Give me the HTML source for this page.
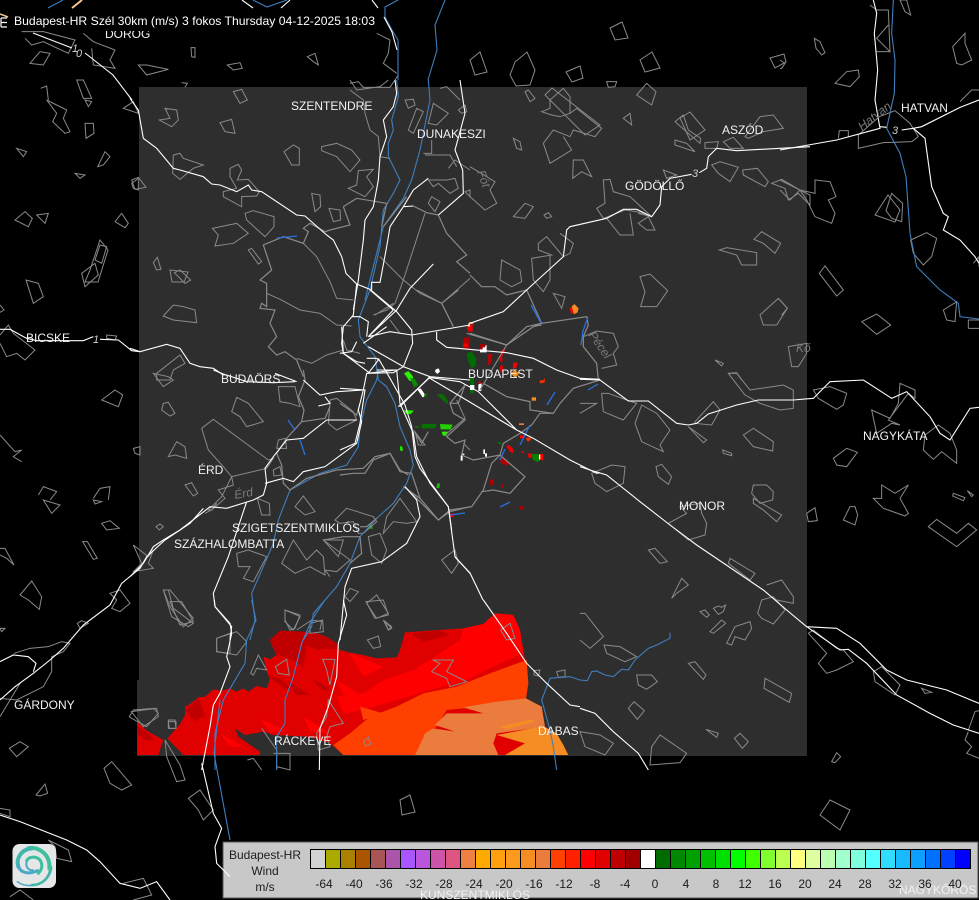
<!DOCTYPE html>
<html lang="hu"><head><meta charset="utf-8"><title>Budapest-HR Wind</title>
<style>
html,body{margin:0;padding:0;background:#000;width:979px;height:900px;overflow:hidden}
svg{display:block;position:absolute;left:0;top:0}
path{vector-effect:non-scaling-stroke;fill:none;stroke-linejoin:miter}
.o path,path.o{stroke:#8a8a8a;stroke-width:1}
.r path,path.r{stroke:#fff;stroke-width:1.1}
.b path,path.b{stroke:#3f7fbf;stroke-width:1.1}
.g path,path.g{stroke:#8a8a8a;stroke-width:1.2}
.f path{stroke:none}
text{font-family:"Liberation Sans",sans-serif}
.l text{fill:#f2f2f2;font-size:12px}
.n text{fill:#cfcfcf;font-size:11px;font-style:italic}
.i text{fill:#7a7a7a;font-size:12px;font-style:italic}
.t text{fill:#1c1c1c;font-size:12px;text-anchor:middle}
</style></head><body>
<svg width="979" height="900" viewBox="0 0 979 900" xmlns="http://www.w3.org/2000/svg">
<rect width="979" height="900" fill="#000"/>
<rect x="139" y="87" width="668" height="669" fill="#2e2e2e"/>
<rect x="137" y="680" width="2" height="76" fill="#2e2e2e"/>

<!-- wide radar field -->
<g class="f" transform="translate(130,600) scale(.33333)">
<path style="fill:#e00000" d="M22 365 50 392 100 420 85 465 22 465z"/>
<path style="fill:#c00000" d="M22 378 80 420 50 422 22 402z"/>
<path style="fill:#e00000" d="M112 415 130 395 150 372 165 345 165 320 180 312 205 292 225 290 250 268 275 272 300 265 320 275 340 265 355 275 380 258 410 265 420 238 410 215 400 170 420 178 440 165 425 135 420 120 450 92 480 98 520 95 560 100 590 110 620 130 630 150 660 158 700 165 740 175 800 172 810 150 825 97 900 92 1000 85 1060 72 1095 40 1150 45 1170 90 1185 180 1195 250 1188 295 1235 320 1245 380 1280 400 1300 435 1315 465 640 465 600 430 540 410 430 405 400 395 345 405 315 385 325 410 390 455 390 465 160 465z"/>
<path style="fill:#c00000" d="M420 120 450 92 520 95 590 110 620 130 630 150 590 145 560 150 530 135 520 200 480 175 440 165 425 135zM410 225 450 235 490 270 460 262zM545 235 590 260 600 275 570 265zM165 330 205 295 225 345 195 365zM470 240 540 285 500 285zM840 100 930 92 960 105 880 125z"/>
<path style="fill:#ff0000" d="M1000 85 1060 72 1095 40 1150 45 1170 90 1180 160 1100 195 1010 240 900 270 800 300 700 330 640 340 620 290 700 280 760 240 850 210 930 160 990 120zM390 355 470 395 420 395zM270 400 340 440 300 440zM660 160 760 200 700 230zM620 240 700 290 640 285zM520 350 600 400 540 395z"/>
<path style="fill:#ff4000" d="M1190 180 1195 250 1188 295 1100 305 1050 320 950 330 920 380 880 410 855 465 640 465 610 435 660 400 720 350 800 320 880 280 980 260 1080 220zM690 320 760 340 700 360zM900 310 1000 300 950 320z"/>
<path style="fill:#ea7d3e" d="M855 465 885 400 910 385 975 395 915 375 950 340 1060 340 1000 322 1100 305 1188 295 1235 320 1245 380 1100 400 1090 430 1105 465z"/>
<path style="fill:#f58c24" d="M1100 405 1170 392 1240 378 1280 400 1300 435 1315 465 1125 465 1185 430z"/>
<path style="fill:#f58c24" d="M1110 380 1205 358 1215 365 1130 388z"/>
</g>

<!-- legend background -->
<rect x="223" y="842" width="755" height="56" fill="#c8c8c8" stroke="#555" stroke-width="1"/>

<!-- small echoes -->
<g class="f" transform="translate(340,290) scale(.33333)">
<path style="fill:#f00" d="M688 55 700 50 705 72 694 70z"/><path style="fill:#f58c24" d="M695 50 703 42 716 55 712 68 702 72z"/>
<path style="fill:#ea7d3e" d="M387 96h13v6h-13z"/><path style="fill:#e00" d="M380 112 385 103 398 103 398 125 385 125z"/><path style="fill:#fff" d="M385 100h4v10h-4z"/>
<path style="fill:#b00000" d="M372 142 388 142 388 178 368 178z"/><path style="fill:#f00" d="M370 160h12v10h-12z"/>
<path style="fill:#fff" d="M420 175 430 168 440 165 440 187 420 187z"/><path style="fill:#a00000" d="M420 162 438 162 435 172 428 172 428 178 420 178z"/>
<path style="fill:#006c00" d="M380 190 395 185 408 205 408 228 395 235 385 215z"/>
<path style="fill:#c00000" d="M445 192 457 192 455 210 450 225 444 225z"/>
<path style="fill:#d00000" d="M483 180 497 178 487 200 488 215 478 215zM480 226 490 226 488 245 478 245z"/>
<path style="fill:#f00" d="M520 218 533 218 528 235 518 235z"/>
<path style="fill:#f58c24" d="M512 250 524 240 538 250 526 264z"/>
<path style="fill:#f33000" d="M598 272 610 270 615 264 614 278 600 280z"/>
<path style="fill:#f59020" d="M575 322h13v10h-13z"/>
<path style="fill:#2bf000" d="M192 250 205 243 218 258 222 275 208 272z"/><path style="fill:#0a8a00" d="M210 262 225 268 235 285 222 292z"/>
<path style="fill:#006c00" d="M390 262h12v48h-12z"/><path style="fill:#fff" d="M390 285h13v15h-13z"/>
<path style="fill:#fff" d="M415 283 425 280 424 303 415 303z"/><path style="fill:#d00000" d="M415 275h8v6h-8z"/>
<path style="fill:#fff" d="M287 238 296 235 300 245 292 252 285 245z"/>
<path style="fill:#fff" d="M232 298 242 295 258 318 248 322z"/><path style="fill:#0a7000" d="M254 310 262 312 258 322 252 320z"/>
<path style="fill:#0a6c00" d="M290 313 310 312 325 335 322 342 308 330 298 322z"/>
<path style="fill:#28f000" d="M192 360 222 362 212 372 198 372z"/>
<path style="fill:#0a7000" d="M245 402 290 402 285 415 245 415zM225 408h13v5h-13z"/><path style="fill:#22d000" d="M300 402 338 404 332 418 302 418z"/><path style="fill:#2bf000" d="M305 425 325 425 318 438 308 436z"/>
<path style="fill:#20e000" d="M180 468 187 470 189 483 180 482z"/>
<path style="fill:#18c000" d="M292 580 300 580 298 594 289 594z"/>
<path style="fill:#fff" d="M430 478h5v12h6v10h-6v-8h-5zM362 498 368 490 375 492 368 496 368 512 362 512z"/>
<path style="fill:#e00" d="M498 468 508 465 520 478 520 490 510 485z"/><path style="fill:#b00000" d="M478 506 490 503 510 518 505 526 484 522z"/>
<path style="fill:#0a7000" d="M472 456 480 455 486 465 476 462z"/>
<path style="fill:#f00" d="M540 436h10v9h-10z"/><path style="fill:#f33000" d="M558 443h14v6l-6 6-6-4z"/><path style="fill:#ea7d3e" d="M537 400h15v5h-15z"/><path style="fill:#f00" d="M545 484h7v5h-7z"/>
<path style="fill:#f00" d="M565 490h10v13h-10z"/><path style="fill:#f00" d="M600 492h10v18h-10z"/><path style="fill:#0a8000" d="M575 492 600 492 600 512 590 516 578 508z"/><path style="fill:#fff" d="M597 494h4v14h-4z"/>
<path style="fill:#b00000" d="M450 568h10v17h-10zM483 582h7v10h-7zM540 648h10v10h-10z"/><path style="fill:#d00000" d="M330 670h12v12h-12z"/>
<path style="fill:#18c000" d="M85 703 95 700 98 716 88 716z"/>
</g>

<!-- thin outlines -->
<g class="o" transform="translate(130,80) scale(.33333)">
<path d="M310 35 335 28 352 60 330 70zM105 85 140 90 145 120 125 140 88 120 120 115zM270 128 305 118 315 160 285 155zM5 300 25 292 48 322 15 328zM130 225 150 220 160 235 220 255 190 265 150 298 128 280zM300 265 325 253 335 270 322 300 355 298 388 335 380 348 335 350 335 380 280 350 280 335 320 325 300 290zM462 215 490 195 508 205 508 255 485 255zM575 200 620 190 665 210 690 240 660 275 620 230 575 212zM685 272 730 268 710 290 730 320 705 350 655 325 680 315zM545 340 570 345 572 380 555 395zM597 385 630 390 632 420 610 425zM345 400 370 392 432 410 432 440 405 470 350 420zM247 445 320 430 355 460 310 490 255 498 265 465zM355 510 365 505 395 545 385 552zM70 548 82 532 93 568 80 570zM133 578 150 570 182 600 165 610zM100 708 130 675 160 680 195 690 200 728 130 720zM80 880 150 825 165 850 130 870 120 900 80 900z"/>
<path d="M660 0 680 30 750 20 775 0M660 30 700 60 705 100 720 150 745 170 750 230 780 235M825 60 850 58 855 75 835 85zM835 150 860 85 880 95 850 160zM930 25 950 20 990 60M895 130 910 70 955 100 920 135zM905 180 905 220 880 220M885 225 960 225 980 260M955 265 975 240 1020 270M895 300 950 300 975 295 985 325 960 340 925 310 910 320zM895 370 905 350 930 365 915 395zM985 90 1005 75 1010 95 995 100zM1005 335 1020 330 1020 350z"/>
<path d="M520 490 560 530 600 605 620 655 670 660M410 640 450 658 510 690 570 700 620 735 665 738M640 810 590 825 545 850 500 835M750 530 820 600 795 670 770 690 730 705M820 600 870 640 935 670 1020 595M935 670 970 740M885 400 820 600M640 780 650 810 690 820M780 720 810 760M735 705 790 670"/>
</g>
<g class="o" transform="translate(470,80) scale(.33333)">
<path d="M165 35 175 30 195 55 180 65zM240 60 280 25 300 50 300 100 270 110 245 105 215 95 240 85zM300 100 320 85 395 145 375 170 310 150 300 170 250 150 220 190 240 250 305 210 280 170M460 115 480 100 485 135zM500 45 530 10 558 35 545 75zM410 5 440 5 435 20 415 22zM615 125 640 105 655 150 692 175 690 190 655 160zM615 180 650 190 675 215 615 195zM705 188 745 185 740 205 705 205zM760 185 790 172 820 205 780 205zM825 170 870 110 910 105 940 145 880 155 835 175zM725 255 750 245 805 262 780 305 745 280zM818 270 862 265 895 305 885 320 820 285zM905 310 935 298 990 330 1020 345 1020 375 985 340 955 360 945 325zM852 478 875 455 932 490 915 520 880 490zM748 510 770 503 860 518 860 555 815 555 800 525zM510 590 540 582 593 632 560 680 512 680 525 635zM870 705 925 655 952 685 920 735 880 735zM955 800 1010 790 1010 820 985 860 965 860zM735 840 760 850 755 858zM775 880 800 878 815 900M400 300 420 298 430 335 480 350 545 410 500 395 465 390 400 415 380 385 405 370zM410 415 450 465 490 465 480 400M505 430 535 410 555 450 530 450zM580 270 620 285 590 295zM310 240 340 240 365 290 335 275 308 295zM130 410 165 370 190 380 165 415zM222 405 235 398 245 410 230 415zM270 460 310 490 300 520 280 530 230 470 205 490 205 510 245 525 185 535 190 600 220 635 240 600 240 525M95 540 150 570 155 605 125 620 90 600zM250 640 285 650 275 685zM340 770 380 753 430 760 445 800 430 820 440 855 395 865M0 260 75 305 60 330 80 370 45 390 0 350"/>
<path d="M130 175 150 185 155 210 140 205zM0 760 110 795 190 740 215 735"/>
</g>
<g class="o" transform="translate(580,370) scale(.33333)">
<path d="M445 10 470 10 510 60 610 45 640 60 640 115 600 120 540 100 495 75zM65 70 85 70 140 90 170 100 130 150 70 125zM0 100 50 100 0 130M185 105 230 130 270 180 240 225 250 245 185 215 165 160zM345 155 400 95 420 120 395 165 345 160zM325 170 380 210 370 218zM490 195 520 175 580 215 578 243 520 230zM428 240 455 250 455 257 430 250zM228 290 245 283 275 320 265 343 235 320zM35 310 95 285 135 290 130 340 80 365 45 340zM520 345 560 345 580 365 578 390 540 400 515 370zM520 385 605 435 590 455 550 420 520 400zM300 410 320 430 265 460 325 510 375 495 380 460 365 430 360 400zM205 540 225 535 262 575 240 580zM450 565 525 610 510 630 445 580zM275 685 305 625 325 645 290 670zM360 725 375 720 388 735 380 742zM400 715 415 708 425 712 437 705 430 725 415 733zM390 785 425 750 437 760 400 790zM440 820 465 770 510 755 515 775 495 810 465 800 455 825zM560 645 605 630 640 680 640 700 590 690M545 690 580 680 615 720 580 762 545 745 533 730zM72 825 120 830 170 860 135 875 80 850zM0 730 15 730 70 800 30 835 0 810M325 880 345 875 378 915 370 928zM170 915 215 915 232 935 200 958 175 945zM555 925 635 970 628 997 552 955zM145 1015 162 995 193 1022 172 1048zM378 1078 415 1090 410 1102zM463 1105 480 1090 505 1115 487 1135zM215 1130 240 1095 320 1150 300 1178 210 1185zM0 1085 60 1095 100 1120 75 1155 15 1130zM685 790 700 780 770 835 790 840 820 875 770 900 740 910 715 880 740 850zM880 905 905 890 960 945 945 975 885 935zM1025 955 1055 967 1035 970zM1045 470 1070 448 1130 490 1165 460 1190 480 1130 530zM1120 370 1155 383 1150 392 1118 378zM1162 362 1180 375 1175 380zM880 385 905 385 905 345 945 370 985 345 960 385 985 430 975 438 910 415zM790 450 810 410 825 410 833 435 825 465zM680 430 705 413 712 452 685 455zM760 265 800 235 832 247 800 290 770 285zM700 60 750 50 800 70 790 105 770 118 715 85zM875 120 930 145 955 100 960 40 1005 60 1005 85 985 70 925 150 960 165 935 160 890 190zM1035 195 1075 165 1110 190 1130 240 1130 280 1085 245 1060 268 1030 240zM1165 1080 1185 1025 1197 1022M1165 1085 1155 1110 1175 1130 1160 1150 1197 1165M755 1175 770 1148 782 1160 765 1178z"/>
</g>
<g class="o" transform="translate(780,0) scale(.33333)">
<path d="M103 115 120 125 135 158 125 165 108 145zM165 250 200 215 235 210 238 230 210 260zM175 415 178 392 205 392 205 410M235 405 298 350 345 332 390 370 415 410 395 425 310 428 235 445zM270 15 290 30 325 30 330 155 290 115 325 75M290 155 330 155M360 0 380 0 392 45 375 35zM518 140 555 100 555 130 575 180 545 195 530 190zM540 305 575 270 597 270M105 540 150 545 168 590 145 600 165 640 155 670 105 650 80 600 60 570 105 580zM0 540 60 570 30 600 0 570M118 820 135 798 190 870 170 888zM245 965 290 942 332 975 290 1003zM318 632 335 580 368 610 365 665 335 655zM392 720 440 698 470 715 455 770 430 795 400 760zM490 930 530 905 525 965 500 960zM565 960 597 960M565 985 597 985M565 960 565 985M580 790 597 770 597 800M0 180 15 190 5 205 0 205M0 900 22 925 5 945"/>
</g>
<g class="o" transform="translate(0,100) scale(.33333)">
<path d="M140 0 200 30 190 55 210 95 195 100 158 65 170 40zM255 0 275 5 265 20zM255 70 280 70 282 100 258 115zM50 145 80 155 70 170zM293 200 315 155 330 170 310 195zM225 220 255 225 240 235zM395 250 415 235 415 270 400 265zM370 25 400 5 415 40zM45 360 75 335 97 355 85 380zM110 345 145 340 135 370zM345 365 365 340 385 370 375 383zM285 480 300 435 320 440 305 490zM245 520 285 490 295 525 255 560zM78 540 115 550 130 590 100 610zM0 615 12 630 0 637M0 705 25 675 40 700 105 750 75 780 50 760 20 770 0 730M320 705 350 708 345 720 320 715zM305 900 345 870 368 885 355 920zM0 1005 45 1055 65 1050 40 1070 65 1085M400 1045 420 1040 420 1065 405 1060zM115 1185 130 1160 170 1175 150 1200M280 1195 300 1165 330 1160 325 1200"/>
</g>
<g class="o" transform="translate(0,500) scale(.33333)">
<path d="M130 0 180 15 155 40zM305 70 330 62 358 85 320 90zM248 125 262 125 292 175 280 178zM0 145 15 145 42 195 20 175 0 165M60 285 95 243 125 290 118 328 85 300zM280 0 305 5 285 12zM330 280 360 270 390 310 360 335 335 325 350 300zM232 370 245 362 265 370 240 385zM400 135 445 170 460 150 445 190 460 205 400 215 425 190zM0 385 15 385 5 395zM42 460 90 445 145 440 185 425 210 430 190 455 155 470 155 515 130 560 50 600 0 595M0 650 30 600 60 550M388 650 400 630 460 625 475 640 440 680 395 655zM505 660 525 660 528 685 505 685zM495 720 540 795 555 840 530 845 500 770zM490 270 505 270 520 325 580 370 565 380 515 350zM650 415 690 400 690 460 650 455zM28 745 60 725 85 740 50 770zM312 805 335 785 395 855 365 870 330 850zM108 885 135 852 143 880 120 888zM565 895 600 870 640 930 610 960 595 930zM0 925 30 930 30 950 0 940M145 1020 205 1050 215 1085 170 1075 165 1040zM370 1150 430 1135 455 1185 400 1200M30 1190 60 1170 100 1200"/>
</g>
<g class="o" transform="translate(0,0) scale(.33333)">
<path d="M65 95 130 95 225 120 205 160 130 125 95 135 75 115M250 100 280 125 345 150 330 180 345 205 280 195 275 145M90 190 120 155 150 160 130 195zM573 143 585 143 585 172 575 170zM415 195 440 195 505 208 440 225zM682 195 720 188 727 205 700 210zM922 170 945 160 955 195 940 185zM122 265 140 258 145 300M230 240 250 240 275 295 250 295zM545 248 562 250 555 262M1050 250 1075 245 1090 262 1170 262 1195 225M1130 100 1170 120 1165 160 1150 190 1190 220"/>
</g>
<g class="o">
<path d="M510 75 515 62 527 52 535 70 530 85 516 86zM545 95 552 88 600 125 585 135zM566 72 580 66 583 78 572 82zM770 58 784 54 786 62 775 68zM680 118 690 112 705 130 690 140zM610 28 622 22 628 38 615 40zM470 60 480 52 487 72 475 75zM640 60 652 52 660 68 645 72zM90 270 100 240 108 250 98 282 85 282zM170 270 188 272 184 282 172 282zM875 215 888 195 900 210 895 222zM830 800 850 810 840 830 820 815zM400 800 410 795 415 812 402 815z"/>
</g>
<g class="o" transform="translate(130,370) scale(.33333)">
<path d="M100 100 115 97 135 130 120 138 95 120zM305 125 320 82 355 100 400 155 350 170 330 140zM215 175 250 148 415 270 430 265 410 295 305 320 310 345 265 360 285 385 245 420 235 420 275 380 305 320 280 290 235 240zM115 260 140 215 165 230 170 265 135 255zM165 345 185 338 203 370 190 378zM78 470 90 462 100 470 88 480zM445 210 465 205 470 235 440 235zM430 300 450 290 455 315 432 318zM382 385 418 400 420 435 395 435zM495 410 520 378 555 425 525 435zM615 450 650 415 730 440 740 455 700 490 685 490 670 455 630 460zM455 580 490 510 530 570 560 540 580 560 585 615 540 590 495 610zM580 510 640 510 625 560zM580 510 660 570 620 605 585 600 600 620M760 490 790 455 830 460 860 455 810 385 770 440zM715 500 750 490 770 540 755 580 725 555zM320 550 355 540 410 560 370 635 340 625 360 590 325 590zM100 660 120 660 190 745 160 770 120 710zM645 680 660 655 685 665 660 695zM710 700 740 675 775 730 740 745zM935 570 975 540 985 580 965 610zM465 720 500 735 510 740 490 780 465 755zM500 780 545 750 575 755 570 780M760 750 785 770 775 780zM600 90 620 85 670 125 680 150 620 180 595 160 600 100zM445 50 495 50 510 110 480 100 450 95zM70 10 115 20 130 30 100 50z"/>
<path d="M855 185 885 225 865 225zM945 195 1005 145 980 90M1000 220 1020 240M225 430 245 420 260 400"/>
</g>
<g class="o" transform="translate(130,600) scale(.33333)">
<path d="M120 5 155 5 190 65 150 75zM465 30 510 45 495 85 480 90 465 60zM540 70 578 60 580 95 540 100zM708 5 760 0 775 45 735 55zM765 65 785 85 775 90zM712 120 745 108 752 140 730 145zM260 115 320 95 350 125 320 165 260 155zM362 220 385 165 410 210 380 205 370 225zM436 200 470 178 478 225 445 220zM578 178 615 178 600 255 590 210zM595 300 640 370 600 380 590 410 600 440 565 450 560 400 590 350zM908 180 970 180 950 215 1010 245 960 260 950 235 905 215 930 190zM1112 90 1140 70 1155 115 1130 120zM4 335 80 325 85 350 40 380zM115 365 138 365 138 385 118 385zM700 425 715 412 722 432 708 438zM1280 215 1305 210 1305 230 1285 232zM1212 212 1230 210 1225 228 1212 225zM395 385 440 450 440 510M430 460 480 460 480 510 440 500M352 480 370 475 395 510"/>
</g>

<!-- rivers -->
<g class="b">
<path d="M398 0 385 7 385 17 392 30 398 40 398 80M445 0 435 25 437 50 428 80M253 0 267 7 287 0M48 8 63 0"/>
<g transform="translate(130,80) scale(.33333)"><path d="M800 0 805 50 785 120 790 150 775 190 775 230 810 300 790 340 760 390 750 500 720 630 685 720 690 770 735 830 745 900M895 0 900 60 870 210 845 300 820 355 760 440 730 560 705 660"/></g>
<g transform="translate(130,370) scale(.33333)"><path d="M745 0 740 30 710 90 690 170 685 230 650 285 570 310 480 360 445 450 430 520 400 590 365 670 375 750 360 810M745 30 770 50 795 100 810 170 840 240 850 285 830 340 790 400 740 445 690 500 660 580 620 650 550 730 545 770 520 810"/></g>
<g transform="translate(130,600) scale(.33333)"><path d="M585 0 545 60 515 130 490 230 465 300 465 370 440 410 440 510M365 0 378 60 350 120 345 190 280 300 255 400 255 510"/></g>
<g transform="translate(0,500) scale(.33333)"><path d="M660 600 642 760 690 1020"/></g>
<g transform="translate(780,0) scale(.33333)"><path d="M340 0 335 100 345 180 343 280 320 385 360 460 378 530 390 700 410 800 480 870 535 910 540 950 597 957"/></g>
<g transform="translate(580,370) scale(.33333)"><path d="M270 788 270 805 230 825 205 835 165 870 145 900 125 898 100 920 75 915 50 903 35 905 22 932 0 930M0 930-30 920-90 925-115 990-90 1080-80 1130 -70 1200"/></g>
</g>

<!-- Budapest border (grey + blue) -->
<g class="g" transform="translate(130,80) scale(.33333)">
<path d="M640 380 680 355 770 370 755 440M640 380 660 435 600 450 585 455 540 430 520 445 535 455 520 490 460 470 400 495 425 570 390 600 410 610 410 680 395 670 390 685 435 690 420 730 440 770 415 800 440 825 465 815 500 840 520 890M760 440 830 350M850 378 890 398 925 405 950 460 1010 525 980 545 1020 580"/>
</g>
<g class="g" transform="translate(470,80) scale(.33333)">
<path d="M0 585 35 620 75 620 110 645 170 630 215 730 350 710 355 735 340 770 340 800 380 850 385 900M215 730 190 740 110 795 0 760M505 400 545 410"/>
</g>
<g class="g" transform="translate(340,290) scale(.33333)">
<path d="M0 555 40 550 75 550 100 510 150 490 180 545 215 550 240 625 295 690 330 660 395 650 430 600 455 520 480 495 490 460 540 430 575 405 600 370 640 370 660 340 700 295 780 270"/>
<path class="o" d="M230 0 305 40 340 110M305 40 355 0M500 165 560 110 605 100M500 165 380 130M500 165 420 300M430 280 500 320 570 335 570 360 640 370M190 590 240 625M330 340 375 285 355 340 330 340 340 370 375 390 320 440 345 460 375 450 365 495 400 510 480 495 555 560 510 610 460 600 425 605M220 420 245 460 265 425M0 340 50 375 60 340"/>
</g>
<g class="g" transform="translate(130,370) scale(.33333)">
<path d="M520 0 525 30 505 80 522 120 515 155 470 205 440 250 455 285 460 340 480 360 530 325 620 300 700 295 735 260 780 250 810 300 835 315M825 350 925 450 960 425 1020 410M690 470 710 470 740 445M580 510 640 500 690 500 695 550 660 580M515 155 585 145 600 110"/>
</g>
<path style="stroke:#2a70e0;stroke-width:1.3" d="M531 305 541 323M588 317 583 331 581 345M598 384 588 390M555 392 547 405M530 425 520 445M500 460 505 449M510 502 500 507M465 513 450 515M277 238 297 236M288 420 295 430M300 440 305 455"/>

<!-- roads -->
<g class="r">
<path d="M33 33 72 48M85 53 113 75 132 100M242 0 253 8M281 8 290 0M372 0 378 8M384 17 392 32 397 50M455 557 470 573 483 600"/>
<g transform="translate(130,80) scale(.33333)">
<path d="M0 55 25 90 40 175 80 205 130 265 150 270 220 290 245 312 270 315 320 335 355 315 365 330 395 335 500 405 525 408 590 465 610 480 635 530 648 580 680 612 720 628 800 695 845 750 848 790 820 860 790 878 710 880"/>
<path d="M680 612 675 660 670 705 640 740 635 790 640 820 680 845 705 850M670 690 685 600 700 480 705 420 730 380 745 300 750 230 770 170 760 120 790 80 800 40 795 0M715 770 800 690 840 625 910 552M710 770 715 725 690 710 665 710M715 770 780 755 845 765 1020 735M715 800 820 860 900 890 1020 900M780 440 770 500 750 607 725 607 725 630M780 440 820 380 850 330 895 295M925 405 1000 340 998 270 975 210 1005 100 990 0M820 380 850 378M715 770 790 690M700 790 770 740M720 630 790 690"/>
<path d="M0 805 30 815 110 793 150 805 180 850 210 860 250 865 280 885"/>
</g>
<g transform="translate(130,370) scale(.33333)">
<path d="M250 0 280 12 350 35 430 38 495 35M435 10 500 35M520 30 570 75 620 65 700 60 710 10 800 0M565 108 600 100 585 80M0 620 40 580 70 530 100 510 150 480 215 430 240 410 290 415 370 390 400 375 410 340 405 295 430 260 470 210 520 205 590 150 680 150M405 340 460 325 490 335 520 305 585 290 680 220 695 155 685 120 700 60M350 395 295 560 250 670 255 710 305 770 300 810M740 0 800 0 810 100 850 190 860 260 900 340 955 410 975 560 1020 610M630 810 645 650 665 595 755 575 830 520 870 440 860 390 825 350M810 110 895 25"/>
</g>
<g transform="translate(130,600) scale(.33333)">
<path d="M253 0 255 20 300 70 305 100 290 170 300 200 270 280 250 315 240 380 215 510M640 0 650 45 625 130 620 230 595 320 570 385 568 510M1060 0 1130 100 1190 190 1250 250 1320 315 1350 320"/>
</g>
<g transform="translate(0,500) scale(.33333)">
<path d="M605 790 640 940 665 985 645 1040 650 1090 690 1130M610 25 570 70 495 120 440 170 420 205 365 250 330 315 250 375 190 445 150 480 100 520 45 560 0 600M0 485 40 465 85 470 108 490 100 515M0 945 60 965 200 1020 260 1050 300 1085 360 1150 420 1165 470 1145 510 1200"/>
</g>
<g transform="translate(0,100) scale(.33333)">
<path d="M0 688 30 688 80 715 110 722 250 722 280 710M300 718 355 720 395 752 420 755"/>
</g>
<g transform="translate(580,370) scale(.33333)">
<path d="M0 290 30 300 80 315 180 395 270 465 350 525 550 660 620 720 680 770 770 775 840 820 920 900 980 930 1100 960 1197 1000M680 770 780 840 805 838 860 880 950 975 1050 1030 1120 1065 1197 1090M0 28 60 30 145 93 205 93 290 160 325 165 350 160 385 132 470 105 535 90 640 90 700 85 750 35 850 30 935 85 980 65 1050 140 1080 190 1110 210 1170 115 1197 112M0 1015 45 1030 100 1085 175 1150 205 1200"/>
</g>
<g transform="translate(780,0) scale(.33333)">
<path d="M280 0 290 40 283 100 293 210 285 300 300 385 170 420 0 450M300 380 320 382M365 390 400 385 425 380 540 322 597 300M400 385 435 415 455 560 490 640 505 650 490 690 540 720 585 770 597 790"/>
</g>
<g transform="translate(470,80) scale(.33333)">
<path d="M0 730 100 695 170 630 280 530 290 450 300 440 410 415 460 388 500 388 545 410 570 375 575 320 600 295 665 283M688 278 710 265 715 230 740 205 800 212 1020 200"/>
</g>
<g transform="translate(340,290) scale(.33333)">
<path d="M290 125 290 150 320 172 500 188 580 205 650 240 720 265 780 268M265 262 360 275 415 305 530 420M265 262 530 420 580 445 690 510 770 550 780 548M270 262 175 350M115 205 150 265 195 345 215 410 225 500 240 535 325 650 335 720M5 110 10 190 90 250M85 250 115 210 110 205 80 205M0 295 75 300 60 400 45 460 0 480M0 190 35 185 50 155"/>
</g>
</g>
<path d="M72 8 82 0" stroke="#f5c78e" stroke-width="2" fill="none"/>

<!-- road numbers / italic town labels -->
<g class="n">
<text x="72" y="52">1</text><text x="76" y="57">0</text>
<text x="93" y="343">1</text>
<text x="692" y="177">3</text><text x="892" y="134">3</text>
</g>
<g class="i">
<text x="235" y="499" transform="rotate(-10 235 499)">Érd</text>
<text x="477" y="172" transform="rotate(70 477 172)">Fót</text>
<text x="588" y="335" transform="rotate(55 588 335)">Pécel</text>
<text x="796" y="352">Kő</text>
<text x="862" y="131" transform="rotate(-38 862 131)">Hatvan</text>
</g>

<!-- place labels -->
<g class="l">
<text x="105" y="38">DOROG</text>
<text x="291" y="110">SZENTENDRE</text>
<text x="417" y="138">DUNAKESZI</text>
<text x="722" y="134">ASZÓD</text>
<text x="625" y="190">GÖDÖLLŐ</text>
<text x="901" y="112">HATVAN</text>
<text x="26" y="342">BICSKE</text>
<text x="221" y="383">BUDAÖRS</text>
<text x="468" y="378">BUDAPEST</text>
<text x="863" y="440">NAGYKÁTA</text>
<text x="198" y="474">ÉRD</text>
<text x="679" y="510">MONOR</text>
<text x="232" y="532">SZIGETSZENTMIKLÓS</text>
<text x="174" y="548">SZÁZHALOMBATTA</text>
<text x="14" y="709">GÁRDONY</text>
<text x="274" y="745">RÁCKEVE</text>
<text x="538" y="735">DABAS</text>
<text x="420" y="899">KUNSZENTMIKLÓS</text>
<text x="899" y="894">NAGYKŐRÖS</text>
</g>

<!-- title -->
<rect x="0" y="15" width="377" height="16" fill="#000"/>
<path d="M1 18H7M1 18V27M1 22.500H7M1 27H7" stroke="#fff" stroke-width="1.200" fill="none"/>
<path d="M0 14 8 17" stroke="#f5c78e" stroke-width="1.500" fill="none"/>
<text x="14" y="25" fill="#fff" font-size="12" textLength="361" lengthAdjust="spacingAndGlyphs">Budapest-HR Szél 30km (m/s) 3 fokos Thursday 04-12-2025 18:03</text>

<!-- legend cells -->
<g stroke="#000" stroke-width="1">
<rect x="310.500" y="849.500" width="15" height="19" fill="#d2d2d2"/>
<rect x="325.500" y="849.500" width="15" height="19" fill="#aaaa00"/>
<rect x="340.500" y="849.500" width="15" height="19" fill="#aa8000"/>
<rect x="355.500" y="849.500" width="15" height="19" fill="#aa5500"/>
<rect x="370.500" y="849.500" width="15" height="19" fill="#aa5555"/>
<rect x="385.500" y="849.500" width="15" height="19" fill="#aa55aa"/>
<rect x="400.500" y="849.500" width="15" height="19" fill="#aa55ff"/>
<rect x="415.500" y="849.500" width="15" height="19" fill="#bb55dd"/>
<rect x="430.500" y="849.500" width="15" height="19" fill="#cc55aa"/>
<rect x="445.500" y="849.500" width="15" height="19" fill="#dd5580"/>
<rect x="460.500" y="849.500" width="15" height="19" fill="#ee8044"/>
<rect x="475.500" y="849.500" width="15" height="19" fill="#ffaa00"/>
<rect x="490.500" y="849.500" width="15" height="19" fill="#ffa010"/>
<rect x="505.500" y="849.500" width="15" height="19" fill="#fb9a1c"/>
<rect x="520.500" y="849.500" width="15" height="19" fill="#f58c24"/>
<rect x="535.500" y="849.500" width="15" height="19" fill="#ea7d3e"/>
<rect x="550.500" y="849.500" width="15" height="19" fill="#ff4000"/>
<rect x="565.500" y="849.500" width="15" height="19" fill="#ff2000"/>
<rect x="580.500" y="849.500" width="15" height="19" fill="#ff0000"/>
<rect x="595.500" y="849.500" width="15" height="19" fill="#e00000"/>
<rect x="610.500" y="849.500" width="15" height="19" fill="#c00000"/>
<rect x="625.500" y="849.500" width="15" height="19" fill="#a00000"/>
<rect x="640.500" y="849.500" width="15" height="19" fill="#ffffff"/>
<rect x="655.500" y="849.500" width="15" height="19" fill="#006c00"/>
<rect x="670.500" y="849.500" width="15" height="19" fill="#008800"/>
<rect x="685.500" y="849.500" width="15" height="19" fill="#00a000"/>
<rect x="700.500" y="849.500" width="15" height="19" fill="#00c000"/>
<rect x="715.500" y="849.500" width="15" height="19" fill="#00e000"/>
<rect x="730.500" y="849.500" width="15" height="19" fill="#00ff00"/>
<rect x="745.500" y="849.500" width="15" height="19" fill="#40ff00"/>
<rect x="760.500" y="849.500" width="15" height="19" fill="#80ff30"/>
<rect x="775.500" y="849.500" width="15" height="19" fill="#bbff50"/>
<rect x="790.500" y="849.500" width="15" height="19" fill="#ffff80"/>
<rect x="805.500" y="849.500" width="15" height="19" fill="#ddffa0"/>
<rect x="820.500" y="849.500" width="15" height="19" fill="#bbffb0"/>
<rect x="835.500" y="849.500" width="15" height="19" fill="#a0ffcc"/>
<rect x="850.500" y="849.500" width="15" height="19" fill="#80ffdd"/>
<rect x="865.500" y="849.500" width="15" height="19" fill="#55ffff"/>
<rect x="880.500" y="849.500" width="15" height="19" fill="#30ddff"/>
<rect x="895.500" y="849.500" width="15" height="19" fill="#18bbff"/>
<rect x="910.500" y="849.500" width="15" height="19" fill="#0ea0ff"/>
<rect x="925.500" y="849.500" width="15" height="19" fill="#0070ff"/>
<rect x="940.500" y="849.500" width="15" height="19" fill="#0040ff"/>
<rect x="955.500" y="849.500" width="15" height="19" fill="#0000ff"/>
</g>
<g class="t">
<text x="265" y="859">Budapest-HR</text><text x="265" y="875">Wind</text><text x="265" y="891">m/s</text>
<text x="324" y="888">-64</text><text x="354" y="888">-40</text><text x="384" y="888">-36</text><text x="414" y="888">-32</text><text x="444" y="888">-28</text><text x="474" y="888">-24</text><text x="504" y="888">-20</text><text x="534" y="888">-16</text><text x="564" y="888">-12</text><text x="595" y="888">-8</text><text x="625" y="888">-4</text><text x="655" y="888">0</text><text x="686" y="888">4</text><text x="716" y="888">8</text><text x="745" y="888">12</text><text x="775" y="888">16</text><text x="805" y="888">20</text><text x="835" y="888">24</text><text x="865" y="888">28</text><text x="895" y="888">32</text><text x="925" y="888">36</text><text x="955" y="888">40</text>
</g>

<!-- logo -->
<rect x="12.500" y="844" width="43.500" height="44" rx="7" fill="#e4e6e8"/>
<g fill="none" stroke-linecap="round" transform="translate(0,830) scale(.33333)">
<path d="M52 155C85 180 150 165 155 112" stroke="#45a7c4" style="stroke-width:1.500"/>
<path d="M95 165C130 165 150 140 152 110" stroke="#3fb6a5" style="stroke-width:2.500"/>
<path d="M148 115C152 70 110 48 85 55" stroke="#3fc09a" style="stroke-width:4"/>
<path d="M95 55C60 58 48 90 55 110" stroke="#42b5ac" style="stroke-width:4"/>
<path d="M55 105C58 128 85 135 112 122" stroke="#4aa8c8" style="stroke-width:3"/>
<path d="M80 95C75 115 90 122 98 120" stroke="#49a9c6" style="stroke-width:2"/>
<path d="M80 92C88 78 110 78 120 90 130 105 125 120 115 130" stroke="#3cbf9e" style="stroke-width:3"/>
</g>
</svg>
</body></html>
